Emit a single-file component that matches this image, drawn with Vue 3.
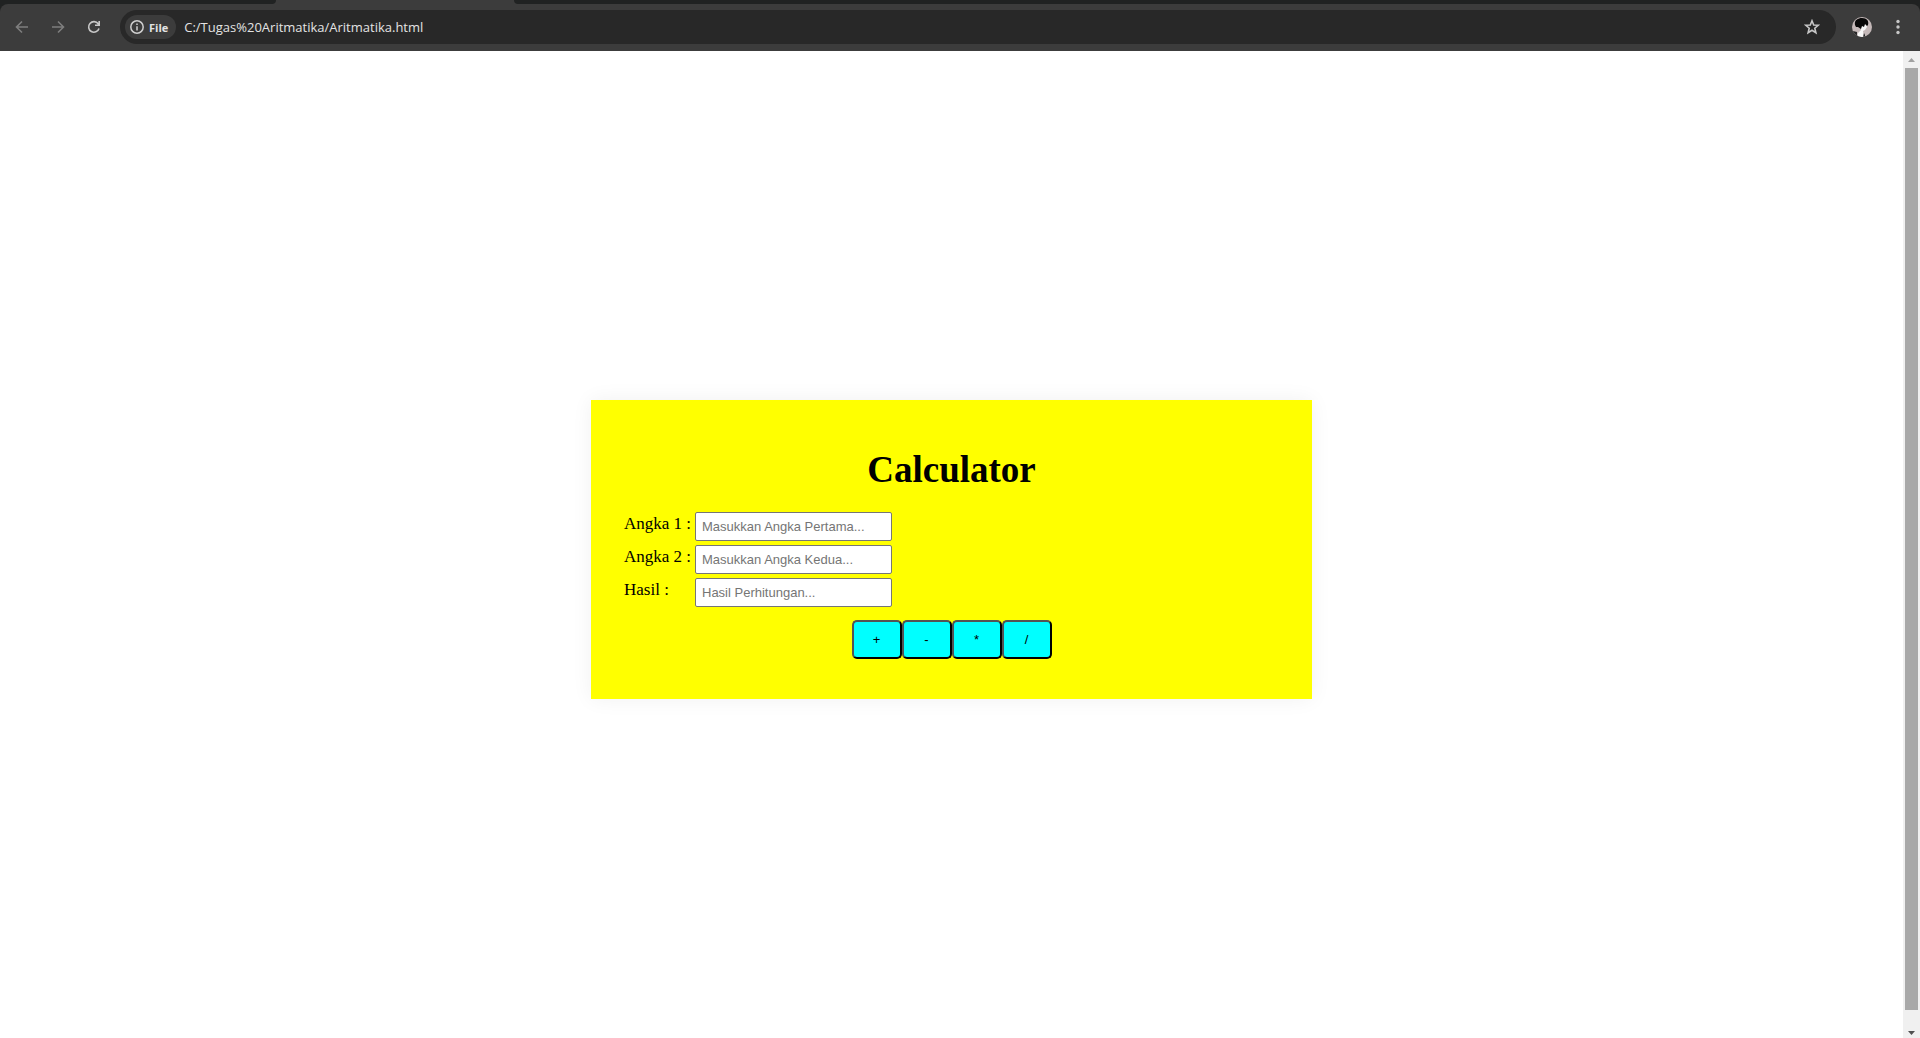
<script setup>
import { ref } from 'vue'

const address = ref('C:/Tugas%20Aritmatika/Aritmatika.html')
const first = ref('')
const second = ref('')
const result = ref('')

const operations = [
  { sign: '+', run: (a, b) => a + b },
  { sign: '-', run: (a, b) => a - b },
  { sign: '*', run: (a, b) => a * b },
  { sign: '/', run: (a, b) => a / b },
]

function calculate(operation) {
  result.value = String(operation.run(Number(first.value), Number(second.value)))
}
</script>

<template>
  <div class="browser">
    <header class="chrome">
      <div class="tabs">
        <div class="tab-rest tab-left"></div>
        <div class="tab-active"></div>
        <div class="tab-rest tab-right"></div>
      </div>
      <div class="toolbar">
        <nav class="nav">
          <button class="icon dim" type="button" aria-label="Back">
            <svg width="16" height="16" viewBox="0 0 16 16"><path d="M14 8H3M8 2.500L2.500 8L8 13.500" /></svg>
          </button>
          <button class="icon dim" type="button" aria-label="Forward">
            <svg width="16" height="16" viewBox="0 0 16 16"><path d="M2 8H13M8 2.500L13.500 8L8 13.500" /></svg>
          </button>
          <button class="icon" type="button" aria-label="Reload">
            <svg width="16" height="16" viewBox="0 0 16 16"><path d="M13 9.500A5.300 5.300 0 1 1 12.200 4.800L13.200 6M13.200 2V6.200H9" /></svg>
          </button>
        </nav>
        <div class="omnibox">
          <button class="chip" type="button">
            <svg width="14" height="14" viewBox="0 0 14 14"><circle cx="7" cy="7" r="6.200" /><path d="M7 6.200V10.500M7 3.500V5" /></svg>
            <span>File</span>
          </button>
          <input v-model="address" class="address" type="text" aria-label="Address" />
          <button class="icon star" type="button" aria-label="Bookmark">
            <svg width="16" height="16" viewBox="0 0 16 16"><path d="M8 1.800L9.700 6L14.200 6.300L10.800 9.200L11.900 13.700L8 11.300L4.100 13.700L5.200 9.200L1.800 6.300L6.300 6Z" /></svg>
          </button>
        </div>
        <button class="icon profile" type="button" aria-label="Profile">
          <svg width="20" height="20" viewBox="0 0 20 20">
            <defs><clipPath id="avatar"><circle cx="10" cy="10" r="10" /></clipPath></defs>
            <g clip-path="url(#avatar)">
              <rect width="20" height="20" fill="#c4b8b8" />
              <path d="M9 9L14 7L15 10L13 13L11 14L12 20H5L6 16L9 13Z" fill="#f8f8f8" />
              <path d="M3 8C2 3 6 1 10 1C15 1 17 4 16 8L15 9L13 7L12 10L10 9L9 12L6 10L4 10Z" fill="#080808" />
              <path d="M1 14L5 15L5 18L6 20H2ZM12 16L13 18L13 20H11Z" fill="#282828" />
            </g>
          </svg>
        </button>
        <button class="icon menu" type="button" aria-label="Menu">
          <svg width="4" height="16" viewBox="0 0 4 16"><circle cx="2" cy="2.500" r="1.700" /><circle cx="2" cy="8" r="1.700" /><circle cx="2" cy="13.500" r="1.700" /></svg>
        </button>
      </div>
    </header>

    <div class="viewport">
      <main class="page">
        <form class="card" @submit.prevent>
          <h1>Calculator</h1>
          <div class="fields">
            <label for="first">Angka 1 :</label>
            <input id="first" v-model="first" type="text" placeholder="Masukkan Angka Pertama..." />
            <label for="second">Angka 2 :</label>
            <input id="second" v-model="second" type="text" placeholder="Masukkan Angka Kedua..." />
            <label for="result">Hasil :</label>
            <input id="result" v-model="result" type="text" placeholder="Hasil Perhitungan..." readonly />
          </div>
          <div class="operations">
            <button v-for="operation in operations" :key="operation.sign" type="button" @click="calculate(operation)">
              {{ operation.sign }}
            </button>
          </div>
        </form>
      </main>
      <div class="scrollbar" aria-hidden="true">
        <svg width="17" height="17" viewBox="0 0 17 17"><path d="M5 11L8.500 7L12 11Z" fill="#a0a0a0" /></svg>
        <div class="thumb"></div>
        <svg class="arrow-down" width="17" height="17" viewBox="0 0 17 17"><path d="M5 10L8.500 14L12 10Z" fill="#505050" /></svg>
      </div>
    </div>
  </div>
</template>

<style>
body {
  margin: 0;
  background: #fff;
}
</style>

<style scoped>
.browser {
  display: flex;
  flex-direction: column;
  height: 100vh;
}

.chrome {
  background: #202222;
}

.tabs {
  display: flex;
  height: 4px;
  background: #3c3c3c;
}

.tab-rest {
  background: #202222;
}

.tab-left {
  width: 276px;
  border-bottom-right-radius: 6px;
}

.tab-active {
  width: 238px;
}

.tab-right {
  flex: 1;
  border-bottom-left-radius: 6px;
}

.toolbar {
  display: flex;
  align-items: center;
  box-sizing: border-box;
  height: 47px;
  padding: 0 12px 1px 14px;
  border-radius: 8px 8px 0 0;
  background: #3c3c3c;
}

.nav {
  display: flex;
  gap: 20px;
  margin-right: 18px;
}

button {
  margin: 0;
  padding: 0;
}

.icon {
  display: flex;
  border: 0;
  background: none;
}

.icon svg {
  fill: none;
  stroke: #c7c7c7;
  stroke-width: 1.6;
}

.icon.dim svg {
  stroke: #7e7e7e;
}

.omnibox {
  display: flex;
  flex: 1;
  align-items: center;
  box-sizing: border-box;
  height: 34px;
  padding: 0 16px 0 5px;
  border-radius: 17px;
  background: #282828;
}

.chip {
  display: flex;
  align-items: center;
  gap: 5px;
  box-sizing: border-box;
  height: 24px;
  padding: 0 8px 0 5px;
  border: 0;
  border-radius: 12px;
  background: #3c3c3c;
  color: #e3e3e3;
  font: bold 11px "Open Sans", sans-serif;
}

.chip svg {
  fill: none;
  stroke: #d0d0d0;
  stroke-width: 1.5;
}

.address {
  flex: 1;
  min-width: 0;
  padding: 0 8px;
  border: 0;
  outline: 0;
  background: none;
  color: #e3e3e3;
  font: 13px "Open Sans", sans-serif;
}

.profile {
  margin-left: 16px;
}

.profile svg {
  stroke: none;
}

.menu {
  margin-left: 16px;
  padding: 0 8px;
}

.menu svg {
  fill: #c7c7c7;
  stroke: none;
}

.viewport {
  display: flex;
  flex: 1;
  min-height: 0;
}

.page {
  display: flex;
  flex: 1;
  align-items: center;
  justify-content: center;
  padding-top: 10px;
  overflow: hidden;
}

.card {
  box-sizing: border-box;
  width: 721px;
  max-width: 100%;
  padding: 48px 32px 40px;
  background: #ff0;
  box-shadow: 0 0 20px rgba(0, 0, 0, 0.06);
  color: #000;
  font: 17px/20px "Liberation Serif", serif;
}

h1 {
  margin: 0 0 20px;
  font-size: 37px;
  line-height: 44px;
  text-align: center;
}

.fields {
  display: grid;
  grid-template-columns: 67px 197px;
  gap: 4px;
  padding-left: 1px;
}

.fields label {
  padding-top: 2px;
  white-space: nowrap;
}

.fields input {
  box-sizing: border-box;
  height: 29px;
  padding: 0 6px;
  border: 1px solid #767676;
  border-radius: 2px;
  background: #fff;
  font: 13px "Liberation Sans", sans-serif;
}

.fields input::placeholder {
  color: #757575;
}

.operations {
  display: flex;
  justify-content: center;
  margin-top: 13px;
}

.operations button {
  width: 50px;
  height: 39px;
  border: 2px outset #000;
  border-radius: 5px;
  background: #0ff;
  color: #000;
  font: 13px "Liberation Sans", sans-serif;
}

.scrollbar {
  display: flex;
  flex-direction: column;
  width: 17px;
  background: #f0f0f0;
}

.thumb {
  flex: 1;
  margin: 0 2px 11px;
  background: #a8a8a8;
}
</style>
